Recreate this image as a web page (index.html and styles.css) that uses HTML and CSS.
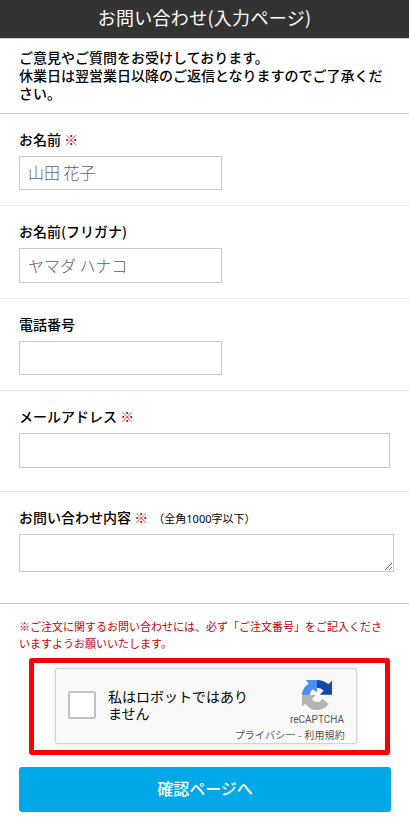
FILE: index.html
```
<!DOCTYPE html>
<html lang="ja">
<head>
  <meta charset="UTF-8">
  <meta name="viewport" content="width=device-width, initial-scale=1.0">
  <title>お問い合わせ</title>
  <link rel="stylesheet" href="styles.css">
</head>
<body>
<h1 class="page-title">お問い合わせ(入力ページ)</h1>
<p class="intro">ご意見やご質問をお受けしております。<br>休業日は翌営業日以降のご返信となりますのでご了承ください。</p>

<form class="contact-form">
  <!-- 入力項目 -->
  <div class="row">
    <label for="name">お名前 <span class="required">※</span></label>
    <input type="text" id="name" placeholder="山田 花子">
  </div>
  <div class="row">
    <label for="kana">お名前(フリガナ)</label>
    <input type="text" id="kana" placeholder="ヤマダ ハナコ">
  </div>
  <div class="row">
    <label for="tel">電話番号</label>
    <input type="tel" id="tel">
  </div>
  <div class="row row-mail">
    <label for="mail">メールアドレス <span class="required">※</span></label>
    <input type="email" id="mail">
  </div>
  <div class="row row-message">
    <label for="message">お問い合わせ内容 <span class="required">※</span> <span class="limit">（全角1000字以下）</span></label>
    <textarea id="message"></textarea>
  </div>

  <p class="note">※ご注文に関するお問い合わせには、必ず「ご注文番号」をご記入くださいますようお願いいたします。</p>

  <!-- reCAPTCHA -->
  <div class="captcha-frame">
    <div class="captcha">
      <span class="captcha-check"></span>
      <span class="captcha-text">私はロボットではありません</span>
      <div class="captcha-brand">
        <svg class="captcha-logo" width="32" height="32" viewBox="12 12 96 96">
          <path fill="#1646a8" d="M60 15c14 0 26 5 34 13l11-10v41H68l12-12c-5-6-12-9-20-9z"/>
          <path fill="#4a90f0" d="M60 15H27l8 11C21 35 15 47 15 60h24c0-7 3-13 8-17l13 9z"/>
          <path fill="#b3b3b3" d="M15 60v34l11-8c8 12 20 19 34 19 15 0 27-7 35-18L77 71c-4 7-10 10-17 10-6 0-12-3-15-8l11-13z"/>
        </svg>
        <span class="captcha-name">reCAPTCHA</span>
        <span class="captcha-links">プライバシー - 利用規約</span>
      </div>
    </div>
  </div>

  <button type="button" class="submit">確認ページへ</button>
</form>
</body>
</html>
```
FILE: styles.css
```
* {
  box-sizing: border-box;
}
body {
  margin: 0;
  background: #fff;
  color: #000;
  font-family: "Noto Sans CJK JP", sans-serif;
  font-size: 14px;
  line-height: 18px;
}
/* 見出し */
.page-title {
  margin: 0;
  height: 39px;
  background: #333;
  border-bottom: 1px solid #ccc;
  color: #fff;
  font-size: 18px;
  font-weight: normal;
  letter-spacing: 0.3px;
  line-height: 34px;
  text-align: center;
}
.intro {
  margin: 0;
  padding: 9px 19px 11px;
  border-bottom: 1px solid #ccc;
  font-weight: 500;
}
/* 入力項目 */
.row {
  padding: 16px 15px 15px 19px;
  border-bottom: 1px solid #e6e6e6;
}
.row-mail {
  padding-bottom: 23.4px;
}
.row-message {
  padding-bottom: 31px;
  border-bottom-color: #ccc;
}
label {
  display: block;
  height: 18px;
  margin-bottom: 8px;
  font-weight: 500;
}
.required {
  color: #c7000b;
  font-weight: bold;
}
.limit {
  margin-left: 2px;
  font-family: "Noto Sans", "Noto Sans CJK JP", sans-serif;
  font-size: 11px;
  font-weight: normal;
}
input, textarea {
  display: block;
  width: 203px;
  height: 34.4px;
  margin: 0;
  padding: 0 8px 2px;
  background: #fff;
  border: 1px solid #ccc;
  border-radius: 0;
  font-family: inherit;
  font-size: 16px;
}
input::placeholder {
  color: #606060;
  font-weight: 300;
}
.row-mail input {
  width: 371px;
}
textarea {
  width: 375px;
  height: 38px;
}
.note {
  margin: 14px 19px 6px;
  color: #c7000b;
  font-size: 11px;
  line-height: 17px;
}
/* reCAPTCHA */
.captcha-frame {
  width: 361px;
  height: 97px;
  margin-left: 29px;
  padding: 5px 21px;
  border: 5px solid #f00;
  border-radius: 3px;
}
.captcha {
  display: flex;
  width: 302px;
  height: 76px;
  background: #f9f9f9;
  border: 1px solid #d3d3d3;
  border-radius: 3px;
  box-shadow: 0 0 4px 1px rgba(0,0,0,0.08);
}
.captcha-check {
  flex-shrink: 0;
  width: 28px;
  height: 28px;
  margin: 22px 12px 0;
  background: #fff;
  border: 2px solid #c1c1c1;
  border-radius: 2px;
}
.captcha-text {
  flex-shrink: 0;
  width: 141px;
  margin-top: 19px;
  line-height: 17px;
}
.captcha-brand {
  display: flex;
  flex: 1;
  flex-direction: column;
  align-items: flex-end;
  min-width: 0;
  padding: 10px 11px 0 0;
  color: #555;
}
.captcha-logo {
  margin-right: 12px;
}
.captcha-name {
  margin: 3px 1px 0 0;
  font-family: Roboto, sans-serif;
  font-size: 10px;
  line-height: 12px;
}
.captcha-links {
  font-size: 10px;
  letter-spacing: 0.2px;
  line-height: 17px;
  white-space: nowrap;
}
/* 送信ボタン */
.submit {
  display: block;
  width: 372px;
  height: 45px;
  margin: 12px 0 14px 19px;
  padding: 0 0 2px;
  background: #00a8e8;
  border: none;
  border-radius: 3px;
  color: #fff;
  font-family: inherit;
  font-size: 16px;
  font-weight: 500;
}
```
